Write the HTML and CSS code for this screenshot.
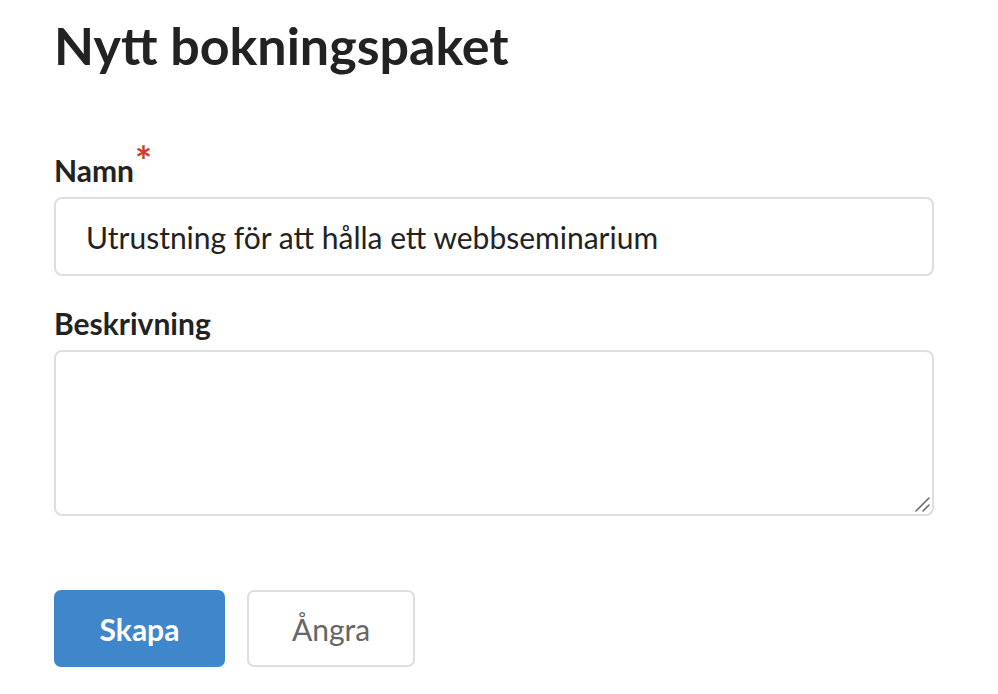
FILE: index.html
```html
<!DOCTYPE html>
<html lang="sv">
<head>
<meta charset="utf-8">
<link rel="stylesheet" href="styles.css">
</head>
<body>
<main class="page">
  <h1 class="title">Nytt bokningspaket</h1>
  <form class="form">
    <div class="field">
      <label class="label" for="namn">Namn<span class="req">*</span></label>
      <input class="input" id="namn" type="text" value="Utrustning för att hålla ett webbseminarium">
    </div>
    <div class="field">
      <label class="label" for="beskr">Beskrivning</label>
      <div class="textarea-wrap">
        <textarea class="textarea" id="beskr"></textarea>
        <svg class="grip" width="16" height="16" viewBox="0 0 16 16" aria-hidden="true">
          <line x1="2" y1="15" x2="15" y2="2" stroke="#6b6b6b" stroke-width="1.6" stroke-linecap="round"/>
          <line x1="9" y1="15" x2="15" y2="9" stroke="#6b6b6b" stroke-width="1.6" stroke-linecap="round"/>
        </svg>
      </div>
    </div>
    <div class="actions">
      <button type="button" class="btn btn-primary">Skapa</button>
      <button type="button" class="btn btn-secondary">Ångra</button>
    </div>
  </form>
</main>
</body>
</html>
```
FILE: styles.css
```css
* { box-sizing: border-box; }
html, body { margin: 0; padding: 0; background: #fff; }
body {
  font-family: Lato, "Open Sans", sans-serif;
  color: #222;
}
.page {
  padding: 13px 64px 0 54px;
}
.title {
  margin: 0;
  font-size: 52px;
  font-weight: 700;
  line-height: 64px;
  color: #222;
}
.form {
  margin-top: 75px;
  display: flex;
  flex-direction: column;
}
.field {
  display: flex;
  flex-direction: column;
  margin-bottom: 29px;
}
.label {
  font-size: 30px;
  font-weight: 700;
  line-height: 36px;
  height: 36px;
  margin-bottom: 9px;
  color: #222;
}
.req {
  color: #d33b30;
  font-size: 40px;
  line-height: 0;
  position: relative;
  top: -6px;
  margin-left: 1px;
}
.input, .textarea {
  width: 880px;
  border: 2px solid #dedede;
  border-radius: 8px;
  font-family: inherit;
  font-size: 30px;
  color: #222;
  background: #fff;
  outline: none;
}
.input {
  height: 79px;
  padding: 0 30px;
}
.textarea-wrap {
  position: relative;
  width: 880px;
  height: 166px;
}
.textarea {
  display: block;
  height: 166px;
  padding: 16px 30px;
  resize: none;
}
.grip {
  position: absolute;
  right: 4px;
  bottom: 4px;
}
.actions {
  display: flex;
  gap: 22px;
  margin-top: 45px;
}
.btn {
  height: 77px;
  border-radius: 7px;
  font-family: inherit;
  font-size: 30px;
  cursor: pointer;
}
.btn-primary {
  width: 171px;
  background: #3f86ca;
  border: none;
  color: #fff;
  font-weight: 700;
}
.btn-secondary {
  width: 168px;
  background: #fff;
  border: 2px solid #dedede;
  color: #666;
  font-weight: 400;
}
```
